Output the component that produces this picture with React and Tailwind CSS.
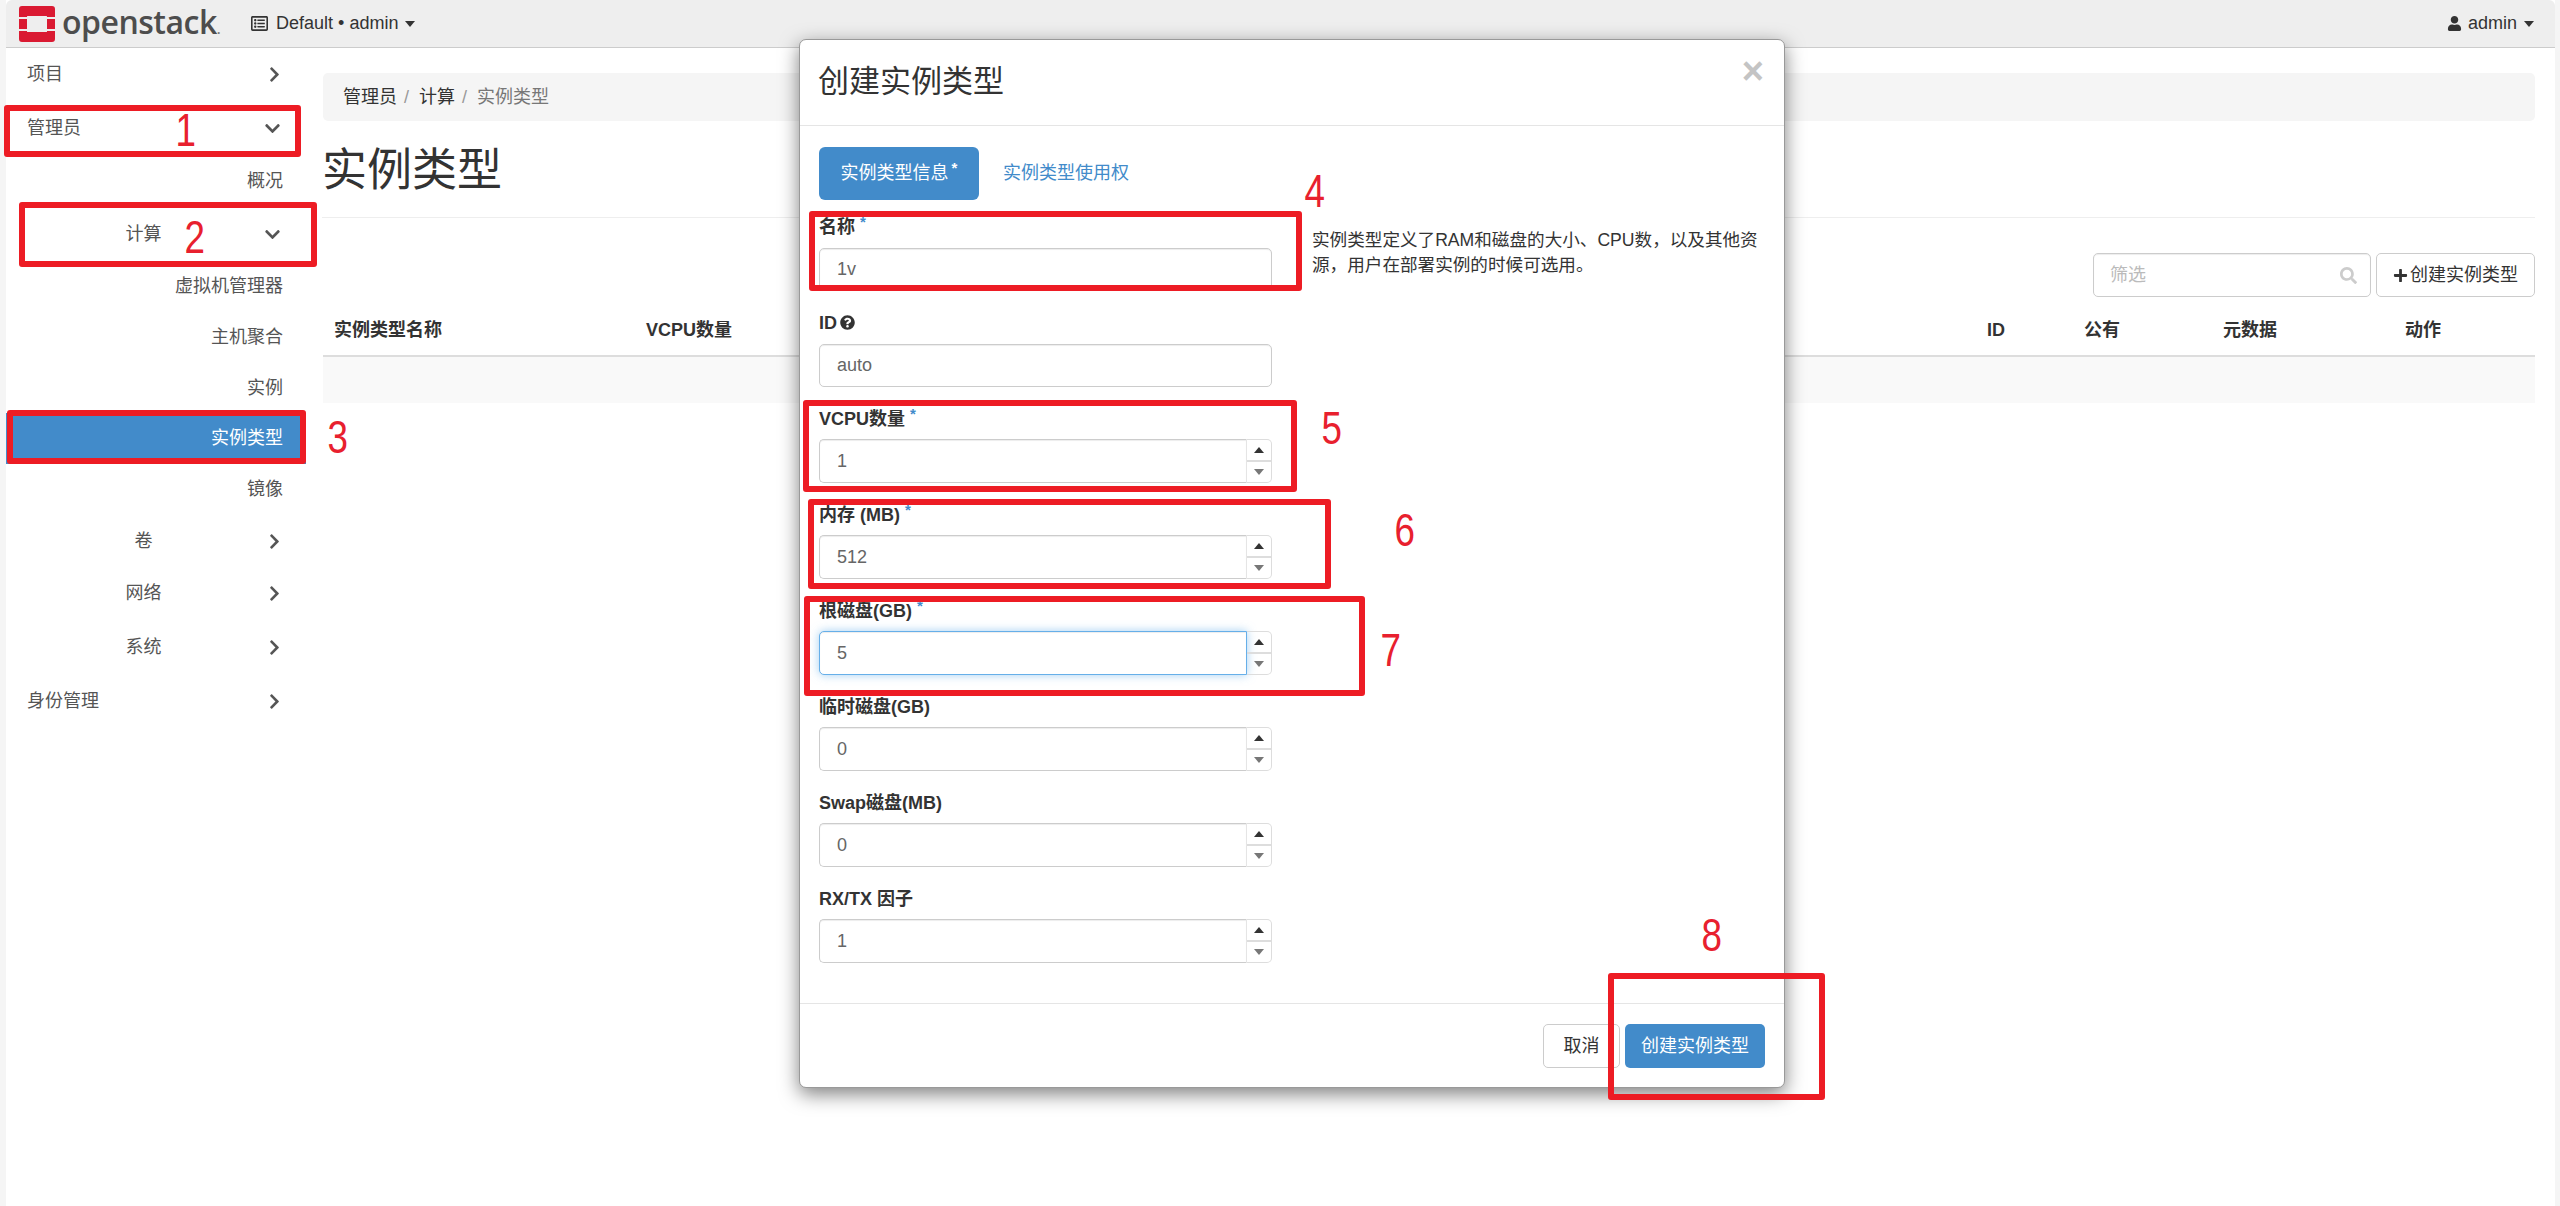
// 实例类型 페이지 + 创建实例类型 모달 + 빨간 주석
import { FaChevronDown, FaChevronRight, FaQuestionCircle, FaRegListAlt, FaSearch, FaUser, FaPlus } from 'react-icons/fa'

const sideItems = [
    { label: '项目', level: 1, arrow: 'right', h: 'h-[53px]' },
    { label: '管理员', level: 1, arrow: 'down', h: 'h-[53px] mt-px' },
    { label: '概况', level: 3, h: 'h-[53px]' },
    { label: '计算', level: 2, arrow: 'down', h: 'h-[52px]' },
    { label: '虚拟机管理器', level: 3, h: 'h-[52px]' },
    { label: '主机聚合', level: 3, h: 'h-[51px]' },
    { label: '实例', level: 3, h: 'h-[50px]' },
    { label: '实例类型', level: 3, active: true, h: 'h-[51px]' },
    { label: '镜像', level: 3, h: 'h-[51px]' },
    { label: '卷', level: 2, arrow: 'right', h: 'h-[52px]' },
    { label: '网络', level: 2, arrow: 'right', h: 'h-[53px]' },
    { label: '系统', level: 2, arrow: 'right', h: 'h-[54px]' },
    { label: '身份管理', level: 1, arrow: 'right', h: 'h-[53px] mt-px' },
]

const columns = [
    { label: '实例类型名称', w: 'w-[312px]' },
    { label: 'VCPU数量', w: 'w-[225px]' },
    { label: '内存', w: 'w-[220px]' },
    { label: '根磁盘', w: 'w-[200px]' },
    { label: '临时磁盘', w: 'w-[200px]' },
    { label: 'Swap磁盘', w: 'w-[200px]' },
    { label: 'RX/TX 因子', w: 'w-[296px]' },
    { label: 'ID', w: 'w-[97px]' },
    { label: '公有', w: 'w-[139px]' },
    { label: '元数据', w: 'w-[182px]' },
    { label: '动作', w: 'w-[141px]' },
]

// 빨간 주석 박스
const redBoxes = [
    'left-[4px] top-[105px] w-[297px] h-[52px]',
    'left-[19px] top-[202px] w-[298px] h-[65px]',
    'left-[7px] top-[410px] w-[299px] h-[54px]',
    'left-[809px] top-[211px] w-[493px] h-[80px]',
    'left-[803px] top-[400px] w-[494px] h-[92px]',
    'left-[808px] top-[499px] w-[523px] h-[90px]',
    'left-[804px] top-[596px] w-[561px] h-[100px]',
    'left-[1608px] top-[973px] w-[217px] h-[127px]',
]

const redNumbers = [
    { n: '1', pos: 'left-[173px] top-[106px]' },
    { n: '2', pos: 'left-[182px] top-[213px]' },
    { n: '3', pos: 'left-[325px] top-[413px]' },
    { n: '4', pos: 'left-[1302px] top-[167px]' },
    { n: '5', pos: 'left-[1319px] top-[404px]' },
    { n: '6', pos: 'left-[1392px] top-[506px]' },
    { n: '7', pos: 'left-[1378px] top-[626px]' },
    { n: '8', pos: 'left-[1699px] top-[911px]' },
]

function Caret() {
    return <span className="inline-block w-0 h-0 border-x-[5px] border-x-transparent border-t-[6px] border-t-[#333]"></span>
}

function Star() {
    return <span className="relative -top-[6px] ml-[5px] text-[15px] leading-none font-bold text-[#428bca]">*</span>
}

function Logo() {
    return (
        <svg width="36" height="36" viewBox="0 0 36 36">
            <path d="M3 0h30a3 3 0 0 1 3 3v8h-8v-.5a.5.5 0 0 0-.5-.5h-19a.5.5 0 0 0-.5.5v.5H0V3a3 3 0 0 1 3-3z" fill="#da1a32" />
            <path d="M0 25h8v.5a.5.5 0 0 0 .5.5h19a.5.5 0 0 0 .5-.5V25h8v8a3 3 0 0 1-3 3H3a3 3 0 0 1-3-3z" fill="#da1a32" />
            <rect x="0" y="13" width="8" height="10" fill="#da1a32" />
            <rect x="28" y="13" width="8" height="10" fill="#da1a32" />
        </svg>
    )
}

function SideItem({ item }) {
    const align = item.level === 1 ? 'text-left' : item.level === 2 ? 'text-center' : 'text-right'
    return (
        <div className={`${item.h} flex items-center pl-[21px] ${item.active ? 'bg-[#428bca] text-white' : 'text-[#555]'}`}>
            <div className={`${item.level === 3 ? 'flex-1 pr-[23px]' : 'w-[233px]'} ${align}`}>{item.label}</div>
            {item.arrow === 'right' && <FaChevronRight className="ml-[6px] text-[#555] text-[17px]" />}
            {item.arrow === 'down' && <FaChevronDown className="ml-[4px] text-[#555] text-[17px]" />}
        </div>
    )
}

function Triangle({ up, dim }) {
    const color = dim ? 'border-b-[#777] border-t-[#777]' : 'border-b-[#333] border-t-[#333]'
    return (
        <span className={`w-0 h-0 border-x-[5px] border-x-transparent ${color} ${up ? 'border-b-[6px] border-t-0' : 'border-t-[6px] border-b-0'}`}></span>
    )
}

function TextField({ label, required, help, value, top }) {
    return (
        <div className="h-[96px]">
            <label className={`block ${top} leading-[24px] font-bold text-[#333]`}>
                {label}{required && <Star />}{help && <FaQuestionCircle className="inline ml-[3px] text-[15px] align-[-1px]" />}
            </label>
            <input readOnly value={value}
                   className="block w-full h-[43px] px-[17px] bg-white border border-[#ccc] rounded-[5px] text-[#666] shadow-[inset_0_1px_1px_rgba(0,0,0,0.075)]" />
        </div>
    )
}

function NumberField({ label, required, value, focused }) {
    return (
        <div className="h-[96px]">
            <label className="block h-[32px] leading-[24px] font-bold text-[#333]">
                {label}{required && <Star />}
            </label>
            <div className="flex h-[44px]">
                <input readOnly value={value}
                       className={`block flex-1 min-w-0 px-[17px] bg-white border rounded-l-[5px] text-[#666] ${focused ? 'border-[#66afe9] shadow-[inset_0_1px_1px_rgba(0,0,0,0.075),0_0_10px_rgba(102,175,233,0.6)]' : 'border-[#ccc] border-r-[#e5e5e5] shadow-[inset_0_1px_1px_rgba(0,0,0,0.075)]'}`} />
                <div className="w-[25px] flex flex-col">
                    <div className="h-[22px] flex items-center justify-center border border-l-0 border-[#ddd] rounded-tr-[5px]"><Triangle up /></div>
                    <div className="h-[22px] flex items-center justify-center border border-l-0 border-[#ddd] rounded-br-[5px]"><Triangle dim /></div>
                </div>
            </div>
        </div>
    )
}

function Modal() {
    return (
        <div className="absolute left-[799px] top-[39px] w-[986px] h-[1049px] bg-white border border-[#999] rounded-[7px] shadow-[0_6px_19px_rgba(0,0,0,0.5)]">
            <div className="h-[86px] flex justify-between border-b border-[#e5e5e5] pl-[18px] pr-[20px]">
                <h4 className="mt-[21px] text-[31px] leading-[42px] text-[#333]">创建实例类型</h4>
                <span className="mt-[13px] h-[36px] text-[38px] leading-[36px] font-bold text-[#c4c4c4]">×</span>
            </div>
            <div className="px-[19px] pt-[21px] pb-[20px]">
                <div className="flex items-center h-[53px]">
                    <div className="h-full w-[160px] flex items-center justify-center bg-[#428bca] rounded-[6px] text-white">
                        实例类型信息<span className="relative -top-[6px] ml-[3px] text-[15px] leading-none font-bold">*</span>
                    </div>
                    <a className="ml-[24px] text-[#428bca]">实例类型使用权</a>
                </div>
                <div className="flex mt-[15px]">
                    <div className="w-[453px]">
                        <TextField label="名称" required value="1v" top="h-[33px]" />
                        <TextField label="ID" help value="auto" top="h-[33px]" />
                        <NumberField label="VCPU数量" required value="1" />
                        <NumberField label="内存 (MB)" required value="512" />
                        <NumberField label="根磁盘(GB)" required value="5" focused />
                        <NumberField label="临时磁盘(GB)" value="0" />
                        <NumberField label="Swap磁盘(MB)" value="0" />
                        <NumberField label="RX/TX 因子" value="1" />
                    </div>
                    <p className="ml-[40px] mt-[13px] w-[453px] text-[17.6px] leading-[25px] text-[#333]">
                        实例类型定义了RAM和磁盘的大小、CPU数，以及其他资源，用户在部署实例的时候可选用。
                    </p>
                </div>
            </div>
            <div className="flex justify-end gap-[5px] border-t border-[#e5e5e5] pt-[20px] pr-[19px]">
                <button className="w-[77px] h-[44px] bg-white border border-[#ccc] rounded-[5px] text-[#333]">取消</button>
                <button className="w-[140px] h-[44px] bg-[#428bca] rounded-[5px] text-white">创建实例类型</button>
            </div>
        </div>
    )
}

function App() {
    return (
        <div className="relative h-[1206px] overflow-hidden bg-[#f5f5f5] pl-[6px] pr-[5px] text-[18px] font-['Liberation_Sans','Noto_Sans_CJK_SC',sans-serif]">
            <div className="h-full bg-white">
                {/* 상단 내비게이션 */}
                <div className="h-[48px] flex items-center justify-between bg-[#eee] border-b border-[#ccc] rounded-tl-[6px] rounded-tr-[6px] pl-[13px] pr-[21px]">
                    <div className="flex items-center">
                        <Logo />
                        <span className="ml-[7px] text-[32px] leading-none -mt-[4px] font-semibold tracking-[-0.5px] text-[#4d4d4d] font-['Open_Sans',sans-serif]">openstack<span className="text-[#777] text-[14px]">.</span></span>
                        <FaRegListAlt className="ml-[31px] text-[17px] text-[#333]" />
                        <span className="ml-[8px] text-[#333]">Default • admin</span>
                        <span className="ml-[7px] flex"><Caret /></span>
                    </div>
                    <div className="flex items-center text-[#333]">
                        <FaUser className="text-[15px]" />
                        <span className="ml-[6px]">admin</span>
                        <span className="ml-[7px] flex"><Caret /></span>
                    </div>
                </div>

                <div className="flex">
                    {/* 사이드바 */}
                    <div className="w-[300px] shrink-0">
                        {sideItems.map((item) => <SideItem key={item.label} item={item} />)}
                    </div>

                    {/* 본문 */}
                    <div className="flex-1 min-w-0 ml-[17px] mr-[20px]">
                        <div className="mt-[25px] h-[48px] flex items-center px-[20px] bg-[#f5f5f5] rounded-[5px] text-[#333]">
                            管理员<span className="ml-[7px] mr-[10px] text-[#999]">/</span>计算<span className="ml-[7px] mr-[10px] text-[#999]">/</span><span className="text-[#777]">实例类型</span>
                        </div>
                        <h1 className="h-[97px] pt-[23px] -ml-px text-[45px] leading-[54px] text-[#333] border-b border-[#eee]">实例类型</h1>
                        <div className="mt-[35px] flex justify-end gap-[5px]">
                            <div className="w-[278px] h-[44px] flex items-center justify-between pl-[16px] pr-[13px] border border-[#ccc] rounded-[5px] text-[#bbb] shadow-[inset_0_1px_1px_rgba(0,0,0,0.075)]">
                                筛选
                                <FaSearch className="text-[17px] text-[#ccc]" />
                            </div>
                            <button className="w-[159px] h-[44px] flex items-center justify-center border border-[#ccc] rounded-[5px] text-[#333]">
                                <FaPlus className="mr-[2px] text-[15px]" />创建实例类型
                            </button>
                        </div>
                        <table className="mt-[8px] w-full table-fixed border-collapse">
                            <colgroup>
                                {columns.map((c) => <col key={c.label} className={c.w} />)}
                            </colgroup>
                            <thead>
                                <tr className="h-[51px] border-b-2 border-[#ddd]">
                                    {columns.map((c) => <th key={c.label} className="px-[11px] text-left font-bold text-[#333]">{c.label}</th>)}
                                </tr>
                            </thead>
                            <tbody>
                                <tr className="h-[47px] bg-[#f9f9f9]"><td colSpan={11}></td></tr>
                            </tbody>
                        </table>
                    </div>
                </div>
            </div>

            <Modal />

            {/* 스크린샷 위 주석 */}
            {redBoxes.map((pos) => (
                <div key={pos} className={`absolute ${pos} border-[6px] border-[#ed1c24] rounded-[3px]`}></div>
            ))}
            {redNumbers.map((d) => (
                <span key={d.n} className={`absolute ${d.pos} w-[24px] text-center text-[46px] leading-[48px] scale-x-[0.8] text-[#e8202e] [text-shadow:0_0_2px_#fff]`}>{d.n}</span>
            ))}
        </div>
    )
}

export default App
